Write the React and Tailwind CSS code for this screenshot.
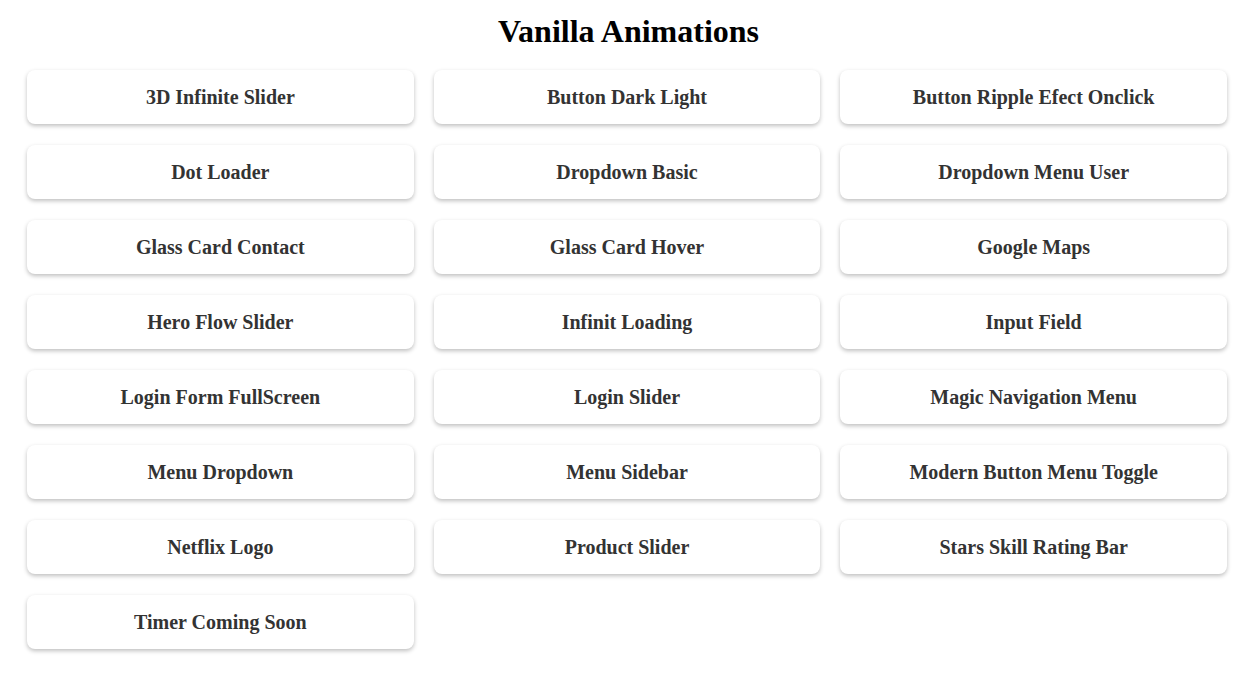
const items = [
  "3D Infinite Slider",
  "Button Dark Light",
  "Button Ripple Efect Onclick",
  "Dot Loader",
  "Dropdown Basic",
  "Dropdown Menu User",
  "Glass Card Contact",
  "Glass Card Hover",
  "Google Maps",
  "Hero Flow Slider",
  "Infinit Loading",
  "Input Field",
  "Login Form FullScreen",
  "Login Slider",
  "Magic Navigation Menu",
  "Menu Dropdown",
  "Menu Sidebar",
  "Modern Button Menu Toggle",
  "Netflix Logo",
  "Product Slider",
  "Stars Skill Rating Bar",
  "Timer Coming Soon",
];

export default function App() {
  return (
    <div className="min-h-screen bg-white" style={{ fontFamily: '"Liberation Serif", "Times New Roman", serif' }}>
      <h1 className="pt-[13px] text-center text-[32px] font-bold leading-[37px] text-black">Vanilla Animations</h1>
      <div className="mt-[20px] pl-[27px]">
        <div className="grid w-[1200px] grid-cols-3 gap-x-[20px] gap-y-[21px]">
          {items.map((t) => (
            <div
              key={t}
              className="flex h-[54px] items-center justify-center rounded-[8px] bg-white text-[20px] font-bold text-[#333] shadow-[0_2px_4px_rgba(0,0,0,0.25)]"
            >
              {t}
            </div>
          ))}
        </div>
      </div>
    </div>
  );
}
